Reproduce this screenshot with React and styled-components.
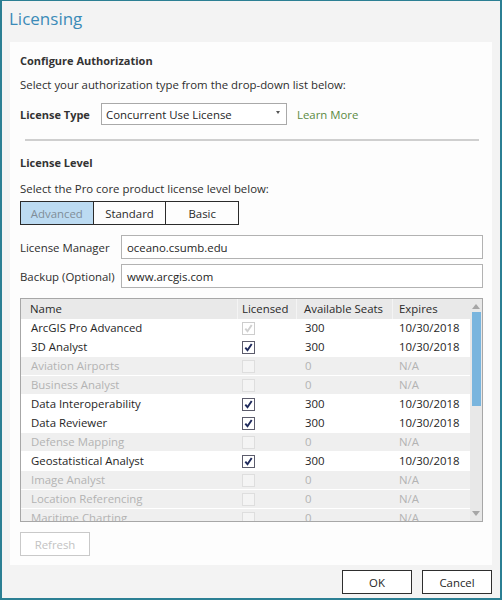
import React from "react";
import styled, { createGlobalStyle, css } from "styled-components";

const Global = createGlobalStyle`
  html, body { margin: 0; padding: 0; background: #f3f3f3; }
  body { font-family: "Open Sans", "Noto Sans", sans-serif; font-size: 11.4px; color: #262626; }
  * { box-sizing: border-box; }
`;

const Frame = styled.div`
  width: 502px;
  height: 600px;
  border: 1px solid #2b7f93;
  border-width: 1px 2px 2px 2px;
  background: #f3f3f3;
  display: flex;
  flex-direction: column;
`;

const Title = styled.div`
  height: 41px;
  padding: 6px 0 0 7px;
  font-size: 17px;
  color: #3b8bb8;
  line-height: 24px;
`;

const Panel = styled.div`
  margin: 0 8px 0 8px;
  background: #fdfdfd;
  padding: 10px 9px 9px 10px;
  display: flex;
  flex-direction: column;
`;

const SectionTitle = styled.div`
  font-weight: 700;
  font-size: 11px;
  line-height: 18px;
  margin-top: ${(p) => p.$mt || 0}px;
  color: #333;
`;

const Desc = styled.div`
  line-height: 16px;
  margin-top: ${(p) => p.$mt || 0}px;
  color: #2e2e2e;
`;

const TypeRow = styled.div`
  display: flex;
  align-items: center;
  margin-top: 10px;
  height: 22px;
`;

const BoldLabel = styled.div`
  font-weight: 700;
  font-size: 11px;
  color: #333;
  width: 81px;
`;

const Select = styled.div`
  width: 186px;
  height: 22px;
  border: 1px solid #a9a9a9;
  background: #fff;
  display: flex;
  align-items: center;
  justify-content: space-between;
  padding: 0 6px 0 4px;
`;

const Caret = styled.span`
  width: 0;
  height: 0;
  border-left: 2.5px solid transparent;
  border-right: 2.5px solid transparent;
  border-top: 3px solid #555;
  margin-bottom: 4px;
`;

const LinkText = styled.span`
  margin-left: 10px;
  color: #5b8a43;
`;

const Separator = styled.div`
  height: 2px;
  background: #cfcfcf;
  margin: 14px 4px 0 5px;
`;

const Segmented = styled.div`
  display: flex;
  margin-top: 4px;
  width: 219px;
  height: 24px;
  border: 1px solid #2b2b2b;
`;

const SegButton = styled.div`
  flex: 1;
  display: flex;
  align-items: center;
  justify-content: center;
  color: #2a2a2a;
  & + & { border-left: 1px solid #2b2b2b; }
  ${(p) =>
    p.$active &&
    css`
      background: #bcdbf2;
      color: #7f8d98;
    `}
`;

const FieldRow = styled.div`
  display: flex;
  align-items: center;
  margin-top: ${(p) => p.$mt}px;
`;

const FieldLabel = styled.div`
  width: 101px;
  white-space: nowrap;
  color: #2e2e2e;
`;

const TextInput = styled.div`
  flex: 1;
  height: 24px;
  border: 1px solid #b2b2b2;
  background: #fff;
  display: flex;
  align-items: center;
  padding-left: 5px;
`;

const Table = styled.div`
  margin-top: 10px;
  height: 224px;
  border: 1px solid #a7a7a7;
  display: flex;
  overflow: hidden;
  background: #fff;
`;

const GridArea = styled.div`
  flex: 1;
  display: flex;
  flex-direction: column;
  overflow: hidden;
`;

const cols = css`
  display: grid;
  grid-template-columns: 216px 59px 96px 1fr;
`;

const HeadRow = styled.div`
  ${cols};
  height: 20px;
  background: #e9e9e9;
  flex-shrink: 0;
`;

const HeadCell = styled.div`
  line-height: 20px;
  padding-left: ${(p) => p.$pl}px;
  color: #2a2a2a;
  & + & { border-left: 1px solid #f4f4f4; }
`;

const Row = styled.div`
  ${cols};
  height: 19px;
  flex-shrink: 0;
  border-bottom: 1px solid #fff;
  background: ${(p) => (p.$disabled ? "#efefef" : "#fff")};
  color: ${(p) => (p.$disabled ? "#b3b3b3" : "#262626")};
`;

const Cell = styled.div`
  line-height: 18px;
  padding-left: ${(p) => p.$pl}px;
  display: flex;
  align-items: center;
  white-space: nowrap;
`;

const Box = styled.div`
  width: 13px;
  height: 13px;
  border: 1px solid ${(p) => (p.$state === "on" ? "#5c5c6c" : p.$state === "grey" ? "#cdcdcd" : "#dedede")};
  background: ${(p) => (p.$state === "off" ? "#f4f4f4" : "#fff")};
  display: flex;
  align-items: center;
  justify-content: center;
`;

const Scrollbar = styled.div`
  width: 12px;
  background: #e8e8e8;
  display: flex;
  flex-direction: column;
  align-items: center;
`;

const Arrow = styled.div`
  width: 0;
  height: 0;
  border-left: 4px solid transparent;
  border-right: 4px solid transparent;
  ${(p) =>
    p.$up
      ? css`border-bottom: 5px solid #a6a6a6; margin-top: 5px;`
      : css`border-top: 5px solid #a6a6a6; margin-top: auto; margin-bottom: 5px;`}
`;

const Thumb = styled.div`
  width: 9px;
  height: 94px;
  margin-top: 3px;
  background: #79b5de;
`;

const Button = styled.div`
  width: 70px;
  height: 24px;
  border: 1px solid ${(p) => (p.$disabled ? "#c9c9c9" : "#2e2e2e")};
  color: ${(p) => (p.$disabled ? "#c3c3c3" : "#262626")};
  background: #fff;
  display: flex;
  align-items: center;
  justify-content: center;
`;

const RefreshWrap = styled.div`
  margin-top: 10px;
`;

const Footer = styled.div`
  display: flex;
  justify-content: flex-end;
  gap: 10px;
  padding: 5px 8px 0 0;
`;

function Check({ state }) {
  return (
    <Box $state={state}>
      {state !== "off" && (
        <svg width="9" height="9" viewBox="0 0 9 9">
          <path
            d="M1.3 4.6 L3.5 7.2 L7.7 1"
            fill="none"
            stroke={state === "on" ? "#1f2a5c" : "#cfcfcf"}
            strokeWidth="1.9"
          />
        </svg>
      )}
    </Box>
  );
}

const rows = [
  ["ArcGIS Pro Advanced", "grey", "300", "10/30/2018", false],
  ["3D Analyst", "on", "300", "10/30/2018", false],
  ["Aviation Airports", "off", "0", "N/A", true],
  ["Business Analyst", "off", "0", "N/A", true],
  ["Data Interoperability", "on", "300", "10/30/2018", false],
  ["Data Reviewer", "on", "300", "10/30/2018", false],
  ["Defense Mapping", "off", "0", "N/A", true],
  ["Geostatistical Analyst", "on", "300", "10/30/2018", false],
  ["Image Analyst", "off", "0", "N/A", true],
  ["Location Referencing", "off", "0", "N/A", true],
  ["Maritime Charting", "off", "0", "N/A", true],
];

export default function App() {
  return (
    <>
      <Global />
      <Frame>
        <Title>Licensing</Title>
        <Panel>
          <SectionTitle>Configure Authorization</SectionTitle>
          <Desc $mt={7}>Select your authorization type from the drop-down list below:</Desc>
          <TypeRow>
            <BoldLabel>License Type</BoldLabel>
            <Select>
              <span>Concurrent Use License</span>
              <Caret />
            </Select>
            <LinkText>Learn More</LinkText>
          </TypeRow>
          <Separator />
          <SectionTitle $mt={13}>License Level</SectionTitle>
          <Desc $mt={9}>Select the Pro core product license level below:</Desc>
          <Segmented>
            <SegButton $active>Advanced</SegButton>
            <SegButton>Standard</SegButton>
            <SegButton>Basic</SegButton>
          </Segmented>
          <FieldRow $mt={10}>
            <FieldLabel>License Manager</FieldLabel>
            <TextInput>oceano.csumb.edu</TextInput>
          </FieldRow>
          <FieldRow $mt={5}>
            <FieldLabel>Backup (Optional)</FieldLabel>
            <TextInput>www.arcgis.com</TextInput>
          </FieldRow>
          <Table>
            <GridArea>
              <HeadRow>
                <HeadCell $pl={9}>Name</HeadCell>
                <HeadCell $pl={4}>Licensed</HeadCell>
                <HeadCell $pl={7}>Available Seats</HeadCell>
                <HeadCell $pl={6}>Expires</HeadCell>
              </HeadRow>
              {rows.map(([name, st, seats, exp, dis]) => (
                <Row key={name} $disabled={dis}>
                  <Cell $pl={10}>{name}</Cell>
                  <Cell $pl={5}>
                    <Check state={st} />
                  </Cell>
                  <Cell $pl={9}>{seats}</Cell>
                  <Cell $pl={7}>{exp}</Cell>
                </Row>
              ))}
            </GridArea>
            <Scrollbar>
              <Arrow $up />
              <Thumb />
              <Arrow />
            </Scrollbar>
          </Table>
          <RefreshWrap>
            <Button $disabled>Refresh</Button>
          </RefreshWrap>
        </Panel>
        <Footer>
          <Button>OK</Button>
          <Button>Cancel</Button>
        </Footer>
      </Frame>
    </>
  );
}
